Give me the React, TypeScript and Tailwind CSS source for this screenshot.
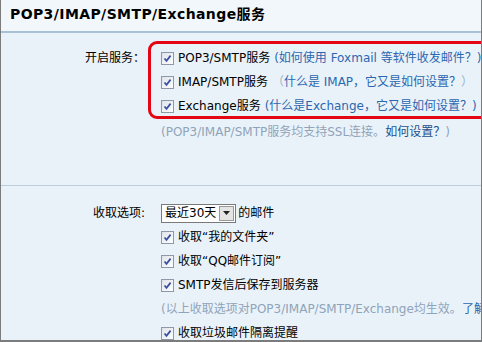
import React from "react";

const FONT = "font-['DejaVu_Sans','Noto_Sans_CJK_SC',sans-serif]";

function Check() {
  return (
    <span className="inline-flex h-[13px] w-[13px] shrink-0 items-center justify-center border border-[#8d99a8] bg-gradient-to-br from-[#dfe3e8] to-white">
      <svg viewBox="0 0 11 11" className="h-[11px] w-[11px]">
        <path d="M2.5 5.5 L4.5 7.8 L8.6 2.6" fill="none" stroke="#3b51a3" strokeWidth={1.8} />
      </svg>
    </span>
  );
}

function CheckRow({ children }: { children: React.ReactNode }) {
  return (
    <div className="flex h-6 items-center gap-[4px] whitespace-nowrap">
      <Check />
      <span>{children}</span>
    </div>
  );
}

export default function App() {
  return (
    <div className={`relative h-[342px] w-[482px] overflow-hidden border-x border-b-2 border-[#7c7c7c] bg-[#eaf2f9] text-[12px] text-black ${FONT}`}>
      {/* Title */}
      <div className="flex h-[33px] items-center border-b-2 border-[#a9c1d6] bg-[#f2f7fb] pl-[9px] pb-[2px]">
        <h2 className="text-[14px] font-bold tracking-[0.4px]">POP3/IMAP/SMTP/Exchange服务</h2>
      </div>

      {/* Services */}
      <div className="flex pt-[13px]">
        <div className="h-6 w-[145px] shrink-0 pr-[1px] text-right leading-6">开启服务：</div>
        <div className="pl-[15px]">
          <CheckRow>
            POP3/SMTP服务<span className="ml-[4px] text-[#2a67b0]">(如何使用 Foxmail 等软件收发邮件？)</span>
          </CheckRow>
          <CheckRow>
            IMAP/SMTP服务<span className="ml-[4px] text-[#2a67b0]"><span className="text-[#9ab2cc]">（</span>什么是 IMAP，它又是如何设置？<span className="text-[#9ab2cc]">）</span></span>
          </CheckRow>
          <CheckRow>
            Exchange服务<span className="ml-[4px] text-[#2a67b0]">(什么是Exchange，它又是如何设置？)</span>
          </CheckRow>
          <div className="flex h-6 items-center whitespace-nowrap pt-[4px] text-[#8fa4ba]">
            (POP3/IMAP/SMTP服务均支持SSL连接。<span className="text-[#1b4f8c]">如何设置？</span>)
          </div>
        </div>
      </div>

      <div className="mt-[43px] border-t border-[#bccddb]" />

      {/* Receive options */}
      <div className="flex pt-[15px]">
        <div className="h-6 w-[145px] shrink-0 pr-[1px] text-right leading-6">收取选项:</div>
        <div className="pl-[15px]">
          <div className="flex h-6 items-center whitespace-nowrap">
            <div className="flex h-[19px] items-center border border-[#7a7a7a] bg-white">
              <span className="px-[3px]">最近30天</span>
              <span className="mr-[1px] flex h-[15px] w-[15px] items-center justify-center border border-[#9a9a9a] bg-[#e4e4e4]">
                <svg viewBox="0 0 7 4" className="h-[4px] w-[7px]">
                  <path d="M0 0 H7 L3.5 4 Z" fill="#222" />
                </svg>
              </span>
            </div>
            <span className="ml-[2px]">的邮件</span>
          </div>
          <CheckRow>收取“我的文件夹”</CheckRow>
          <CheckRow>收取“QQ邮件订阅”</CheckRow>
          <CheckRow>SMTP发信后保存到服务器</CheckRow>
          <div className="flex h-6 items-center whitespace-nowrap text-[#8fa4ba]">
            (以上收取选项对POP3/IMAP/SMTP/Exchange均生效。<span className="text-[#2a67b0]">了解更多</span>)
          </div>
          <CheckRow>收取垃圾邮件隔离提醒</CheckRow>
        </div>
      </div>

      {/* Highlight annotation */}
      <div className="pointer-events-none absolute left-[147px] top-[41px] h-[78px] w-[360px] rounded-[9px] border-[3px] border-[#e30613]" />
    </div>
  );
}
